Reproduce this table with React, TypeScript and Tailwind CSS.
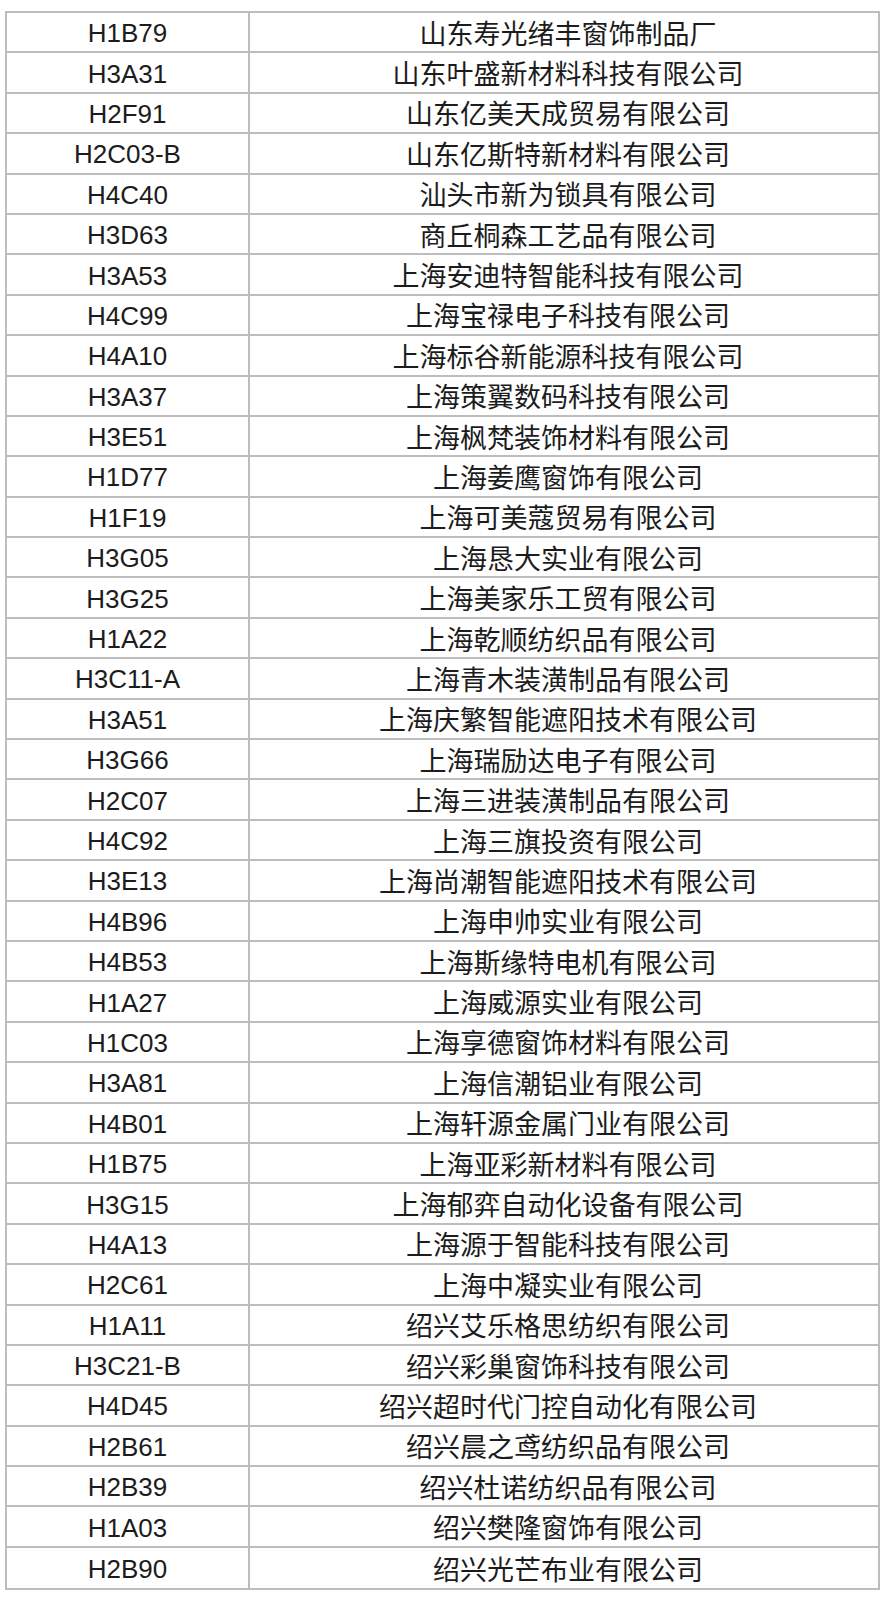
const rows: [string, string][] = [
  ["H1B79", "山东寿光绪丰窗饰制品厂"],
  ["H3A31", "山东叶盛新材料科技有限公司"],
  ["H2F91", "山东亿美天成贸易有限公司"],
  ["H2C03-B", "山东亿斯特新材料有限公司"],
  ["H4C40", "汕头市新为锁具有限公司"],
  ["H3D63", "商丘桐森工艺品有限公司"],
  ["H3A53", "上海安迪特智能科技有限公司"],
  ["H4C99", "上海宝禄电子科技有限公司"],
  ["H4A10", "上海标谷新能源科技有限公司"],
  ["H3A37", "上海策翼数码科技有限公司"],
  ["H3E51", "上海枫梵装饰材料有限公司"],
  ["H1D77", "上海姜鹰窗饰有限公司"],
  ["H1F19", "上海可美蔻贸易有限公司"],
  ["H3G05", "上海恳大实业有限公司"],
  ["H3G25", "上海美家乐工贸有限公司"],
  ["H1A22", "上海乾顺纺织品有限公司"],
  ["H3C11-A", "上海青木装潢制品有限公司"],
  ["H3A51", "上海庆繁智能遮阳技术有限公司"],
  ["H3G66", "上海瑞励达电子有限公司"],
  ["H2C07", "上海三进装潢制品有限公司"],
  ["H4C92", "上海三旗投资有限公司"],
  ["H3E13", "上海尚潮智能遮阳技术有限公司"],
  ["H4B96", "上海申帅实业有限公司"],
  ["H4B53", "上海斯缘特电机有限公司"],
  ["H1A27", "上海威源实业有限公司"],
  ["H1C03", "上海享德窗饰材料有限公司"],
  ["H3A81", "上海信潮铝业有限公司"],
  ["H4B01", "上海轩源金属门业有限公司"],
  ["H1B75", "上海亚彩新材料有限公司"],
  ["H3G15", "上海郁弈自动化设备有限公司"],
  ["H4A13", "上海源于智能科技有限公司"],
  ["H2C61", "上海中凝实业有限公司"],
  ["H1A11", "绍兴艾乐格思纺织有限公司"],
  ["H3C21-B", "绍兴彩巢窗饰科技有限公司"],
  ["H4D45", "绍兴超时代门控自动化有限公司"],
  ["H2B61", "绍兴晨之鸢纺织品有限公司"],
  ["H2B39", "绍兴杜诺纺织品有限公司"],
  ["H1A03", "绍兴樊隆窗饰有限公司"],
  ["H2B90", "绍兴光芒布业有限公司"],
];

export default function App() {
  return (
    <div className="w-[882px] h-[1600px] bg-white pt-[11px] pl-[5px]">
      <div className="w-[875px] border-2 border-[#bdbdbd] text-[#1c1c1c] font-['Liberation_Sans','Noto_Sans_CJK_SC',sans-serif]">
        {rows.map(([code, name], i) => (
          <div
            key={code}
            className={`flex h-[40.4px] ${i < rows.length - 1 ? "border-b-2 border-[#bdbdbd]" : ""}`}
          >
            <div className="w-[243px] shrink-0 border-r-2 border-[#bdbdbd] flex items-center justify-center pt-[2px] text-[26px] leading-none">
              {code}
            </div>
            <div className="flex-1 flex items-center justify-center pl-[8px] text-[27px] leading-none font-['Noto_Sans_CJK_SC',sans-serif]">
              {name}
            </div>
          </div>
        ))}
      </div>
    </div>
  );
}
